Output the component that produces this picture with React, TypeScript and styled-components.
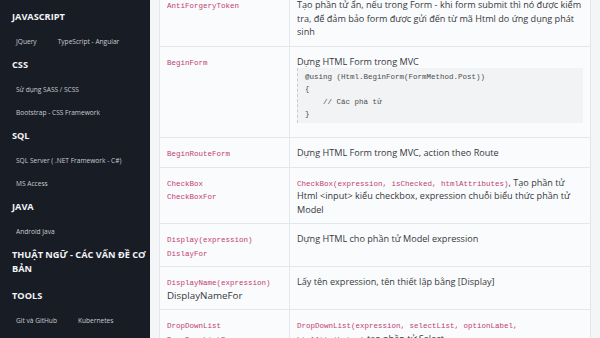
import styled, { createGlobalStyle } from 'styled-components'

const GlobalStyle = createGlobalStyle`
	html, body, #root {
		margin: 0;
		padding: 0;
		height: 100%;
		overflow: hidden;
	}
	body {
		font-family: 'Open Sans', 'Noto Sans', sans-serif;
		background: #f3f5f7;
	}
`

type NavSection = {
	title: string
	links: string[]
}

const navSections: NavSection[] = [
	{ title: 'JAVASCRIPT', links: ['JQuery', 'TypeScript - Angular'] },
	{ title: 'CSS', links: ['Sử dụng SASS / SCSS', 'Bootstrap - CSS Framework'] },
	{ title: 'SQL', links: ['SQL Server ( .NET Framework - C#)', 'MS Access'] },
	{ title: 'JAVA', links: ['Android Java'] },
	{ title: 'THUẬT NGỮ - CÁC VẤN ĐỀ CƠ BẢN', links: [] },
	{ title: 'TOOLS', links: ['Git và GitHub', 'Kubernetes'] },
]

export default function App() {
	return (
		<>
			<GlobalStyle />
			<Page>
				<Sidebar>
					{navSections.map((section) => (
						<Section key={section.title} $empty={section.links.length === 0}>
							<SectionTitle>{section.title}</SectionTitle>
							{section.links.length > 0 && (
								<Links>
									{section.links.map((link) => (
										<NavLink key={link}>{link}</NavLink>
									))}
								</Links>
							)}
						</Section>
					))}
				</Sidebar>
				<Main>
					<Table>
						<colgroup>
							<col style={{ width: 130 }} />
							<col />
						</colgroup>
						<tbody>
							<tr>
								<Cell>
									<Code>AntiForgeryToken</Code>
								</Cell>
								<Cell>
									Tạo phần tử ẩn, nếu trong Form - khi form submit thì nó được kiểm
									tra, để đảm bảo form được gửi đến từ mã Html do ứng dụng phát sinh
								</Cell>
							</tr>
							<tr>
								<Cell>
									<Code>BeginForm</Code>
								</Cell>
								<Cell>
									Dựng HTML Form trong MVC
									<Pre>
										{'@using (Html.BeginForm(FormMethod.Post))\n{\n    // Các phầ tử\n}'}
									</Pre>
								</Cell>
							</tr>
							<tr>
								<Cell>
									<Code>BeginRouteForm</Code>
								</Cell>
								<Cell>Dựng HTML Form trong MVC, action theo Route</Cell>
							</tr>
							<tr>
								<Cell>
									<Code>CheckBox</Code>
									<br />
									<Code>CheckBoxFor</Code>
								</Cell>
								<Cell>
									<Code>CheckBox(expression, isChecked, htmlAttributes)</Code>, Tạo phần tử
									Html &lt;input&gt; kiểu checkbox, expression chuỗi biểu thức phần tử Model
								</Cell>
							</tr>
							<tr>
								<Cell>
									<Code>Display(expression)</Code>
									<br />
									<Code>DislayFor</Code>
								</Cell>
								<Cell>Dựng HTML cho phần tử Model expression</Cell>
							</tr>
							<tr>
								<Cell>
									<Code>DisplayName(expression)</Code>
									<br />
									<Plain>DisplayNameFor</Plain>
								</Cell>
								<Cell>Lấy tên expression, tên thiết lập bằng [Display]</Cell>
							</tr>
							<tr>
								<Cell>
									<Code>DropDownList</Code>
									<br />
									<Code>DropDownListFor</Code>
								</Cell>
								<Cell>
									<Code>DropDownList(expression, selectList, optionLabel, htmlAttributes)</Code>{' '}
									tạo phần tử Select
								</Cell>
							</tr>
						</tbody>
					</Table>
				</Main>
			</Page>
		</>
	)
}

const Page = styled.div`
	display: flex;
	height: 100%;
`

const Sidebar = styled.nav`
	width: 150px;
	flex-shrink: 0;
	background: #181c25;
	padding: 5px 2px 0 12px;
	box-sizing: border-box;
`

const Section = styled.div<{ $empty?: boolean }>`
	margin-top: 5px;
	margin-bottom: ${(p) => (p.$empty ? '13px' : '0')};
`

const SectionTitle = styled.h3`
	margin: 0 0 6px;
	font-size: 9.2px;
	font-weight: 700;
	line-height: 14px;
	color: #f2f3f5;
`

const Links = styled.div`
	display: flex;
	flex-wrap: wrap;
	column-gap: 21px;
	padding-left: 4px;
`

const NavLink = styled.a`
	font-size: 6.6px;
	line-height: 23px;
	color: #c8cbd2;
	cursor: pointer;
`

const Main = styled.main`
	flex: 1;
	padding: 0 9px;
	background: #f3f5f7;
`

const Table = styled.table`
	width: 100%;
	margin-top: -11px;
	border-collapse: collapse;
	table-layout: fixed;
	background: #fafbfc;
`

const Cell = styled.td`
	vertical-align: top;
	padding: 8px 7px 7px;
	border: 1px solid #e3e6ea;
	font-size: 9.1px;
	line-height: 13.5px;
	color: #35383d;
`

const Plain = styled.span`
	font-size: 9.8px;
	line-height: 1;
`

const Code = styled.code`
	font-family: 'Liberation Mono', 'DejaVu Sans Mono', monospace;
	font-size: 7.5px;
	line-height: 1;
	color: #c23d72;
`

const Pre = styled.pre`
	margin: 0 0 7px;
	padding: 3px 7px;
	background: #f2f3f4;
	border-left: 1px dashed #c9cbcf;
	font-family: 'Liberation Mono', 'DejaVu Sans Mono', monospace;
	font-size: 7.5px;
	line-height: 12.3px;
	color: #4a4d52;
`
